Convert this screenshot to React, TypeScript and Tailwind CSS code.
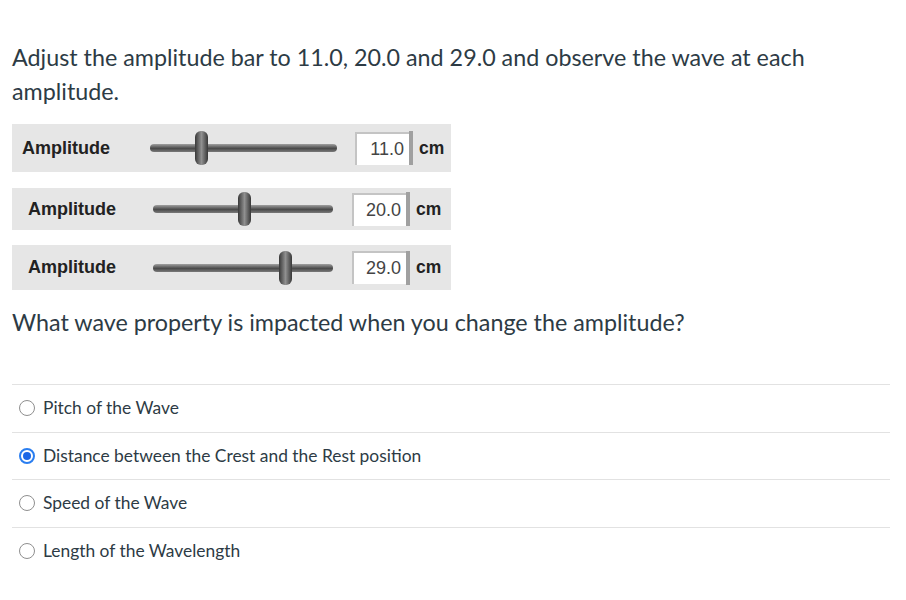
const options = [
  "Pitch of the Wave",
  "Distance between the Crest and the Rest position",
  "Speed of the Wave",
  "Length of the Wavelength",
];

const sliders = [
  { value: "11.0", thumb: 45, labelPad: "pl-[10px]", box: "h-[48px]", track: "ml-[28px] w-[187px]", gap: "ml-[18px]" },
  { value: "20.0", thumb: 85, labelPad: "pl-[16px]", box: "h-[42px] mt-[16px]", track: "ml-[25px] w-[180px]", gap: "ml-[19px]" },
  { value: "29.0", thumb: 126, labelPad: "pl-[16px]", box: "h-[45px] mt-[15px]", track: "ml-[25px] w-[180px]", gap: "ml-[19px]" },
];

function Slider({ thumb, className }: { thumb: number; className: string }) {
  return (
    <div className={`relative h-[36px] ${className}`}>
      <div className="absolute left-0 right-0 top-[14px] h-[8px] rounded-full bg-[linear-gradient(to_bottom,#a0a0a0,#4a4a4a_55%,#7a7a7a)]" />
      <div
        className="absolute top-[1px] h-[34px] w-[13px] rounded-[6px] bg-[linear-gradient(to_right,#383838,#909090_50%,#383838)]"
        style={{ left: thumb }}
      />
    </div>
  );
}

export default function App() {
  return (
    <div className="min-h-[600px] w-[906px] bg-white px-[12px] pt-[40px] text-[#2d3b45] [font-family:Lato,sans-serif]">
      <p className="text-[23.3px] leading-[34px]">
        Adjust the amplitude bar to 11.0, 20.0 and 29.0 and observe the wave at each amplitude.
      </p>

      <div className="mt-[16px] w-[439px] [font-family:'Liberation_Sans',Arial,sans-serif]">
        {sliders.map((s) => (
          <div key={s.value} className={`flex items-center bg-[#e6e6e6] ${s.box} ${s.labelPad}`}>
            <span className="w-[100px] text-[18px] font-bold text-[#222]">Amplitude</span>
            <Slider thumb={s.thumb} className={s.track} />
            <div className={`flex items-center ${s.gap}`}>
              <div className="flex h-[33px] w-[54px] items-center justify-end border-l-2 border-t-2 border-[#c4c4c4] bg-white pr-[5px] text-[18px] text-[#444]">
                {s.value}
              </div>
              <div className="h-[34px] w-[4px] bg-[#a0a0a0]" />
              <span className="ml-[6px] text-[17.5px] font-bold text-[#222]">cm</span>
            </div>
          </div>
        ))}
      </div>

      <p className="mt-[15px] text-[23.3px] leading-[34px]">
        What wave property is impacted when you change the amplitude?
      </p>

      <div className="mt-[45px] w-[878px]">
        {options.map((o, i) => (
          <label
            key={o}
            className="flex h-[47.5px] items-center border-t border-[#e2e2e2] pl-[7px] text-[17.4px]"
          >
            {i === 1 ? (
              <span className="flex h-[16px] w-[16px] items-center justify-center rounded-full border-2 border-[#2a7ef0] bg-white">
                <span className="h-[8px] w-[8px] rounded-full bg-[#1a66e6]" />
              </span>
            ) : (
              <span className="h-[16px] w-[16px] rounded-full border border-[#8f8f8f] bg-white" />
            )}
            <span className="ml-[8px]">{o}</span>
          </label>
        ))}
      </div>
    </div>
  );
}
